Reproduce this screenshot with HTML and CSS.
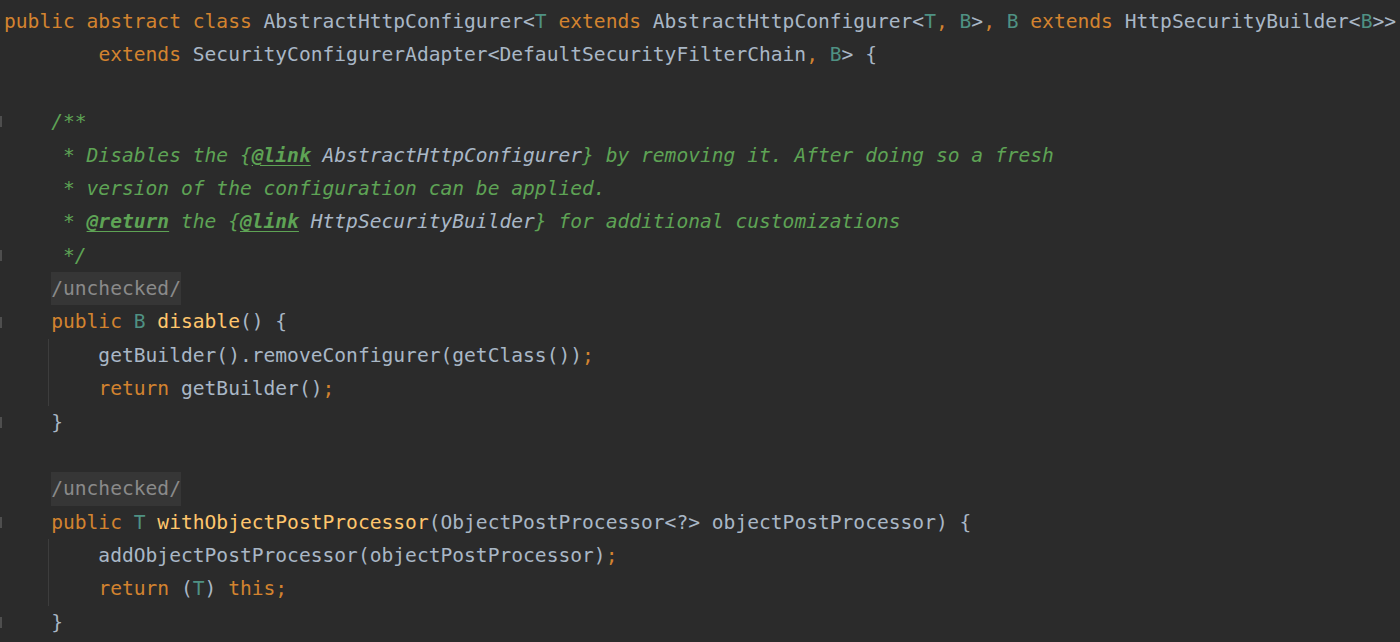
FILE: index.html
```html
<!DOCTYPE html>
<html>
<head>
<meta charset="utf-8">
<link rel="stylesheet" href="styles.css">
</head>
<body>
<div class="editor">
<div class="ln"><span class="kw">public abstract class </span>AbstractHttpConfigurer&lt;<span class="tp">T</span> <span class="kw">extends </span>AbstractHttpConfigurer&lt;<span class="tp">T</span><span class="kw">, </span><span class="tp">B</span>&gt;<span class="kw">, </span><span class="tp">B</span> <span class="kw">extends </span>HttpSecurityBuilder&lt;<span class="tp">B</span>&gt;&gt;</div>
<div class="ln">        <span class="kw">extends </span>SecurityConfigurerAdapter&lt;DefaultSecurityFilterChain<span class="kw">, </span><span class="tp">B</span>&gt; {</div>
<div class="ln"> </div>
<div class="ln fold">    <span class="doc">/**</span></div>
<div class="ln">     <span class="doc">* Disables the {<span class="tag">@link</span> <span class="ref">AbstractHttpConfigurer</span>} by removing it. After doing so a fresh</span></div>
<div class="ln">     <span class="doc">* version of the configuration can be applied.</span></div>
<div class="ln">     <span class="doc">* <span class="tag">@return</span> the {<span class="tag">@link</span> <span class="ref">HttpSecurityBuilder</span>} for additional customizations</span></div>
<div class="ln fold">     <span class="doc">*/</span></div>
<div class="ln">    <span class="ann">/unchecked/</span></div>
<div class="ln fold">    <span class="kw">public </span><span class="tp">B</span> <span class="fn">disable</span>() {</div>
<div class="block">
<div class="ln">        getBuilder().removeConfigurer(getClass())<span class="kw">;</span></div>
<div class="ln">        <span class="kw">return </span>getBuilder()<span class="kw">;</span></div>
</div>
<div class="ln fold">    }</div>
<div class="ln"> </div>
<div class="ln">    <span class="ann">/unchecked/</span></div>
<div class="ln fold">    <span class="kw">public </span><span class="tp">T</span> <span class="fn">withObjectPostProcessor</span>(ObjectPostProcessor&lt;?&gt; objectPostProcessor) {</div>
<div class="block">
<div class="ln">        addObjectPostProcessor(objectPostProcessor)<span class="kw">;</span></div>
<div class="ln">        <span class="kw">return </span>(<span class="tp">T</span>) <span class="kw">this;</span></div>
</div>
<div class="ln fold">    }</div>
</div>
</body>
</html>
```
FILE: styles.css
```css
html, body {
  margin: 0;
  padding: 0;
  background: #2b2b2b;
}

.editor {
  width: 1400px;
  height: 642px;
  overflow: hidden;
  padding-top: 5px;
  box-sizing: border-box;
  font-family: "DejaVu Sans Mono", "Liberation Mono", monospace;
  font-size: 19.6px;
  color: #a9b7c6;
}

.ln {
  height: 33.375px;
  line-height: 33.375px;
  padding-left: 4px;
  white-space: pre;
  overflow: hidden;
}

.fold {
  background: linear-gradient(#4e4e4e, #4e4e4e) no-repeat 0 center / 2px 11px;
}

.block {
  background: linear-gradient(#3d3d3d, #3d3d3d) no-repeat 48px 0 / 1px 100%;
}

.kw { color: #d3832f; }
.tp { color: #4f9183; }
.fn { color: #ffc66d; }
.doc { color: #5ea355; font-style: italic; }
.tag { font-weight: bold; text-decoration: underline; text-underline-offset: 3px; }
.ref { color: #a9b7c6; }
.ann {
  display: inline-block;
  vertical-align: top;
  color: #8a8a8a;
  background: #363636;
  height: 33.375px;
}
```
